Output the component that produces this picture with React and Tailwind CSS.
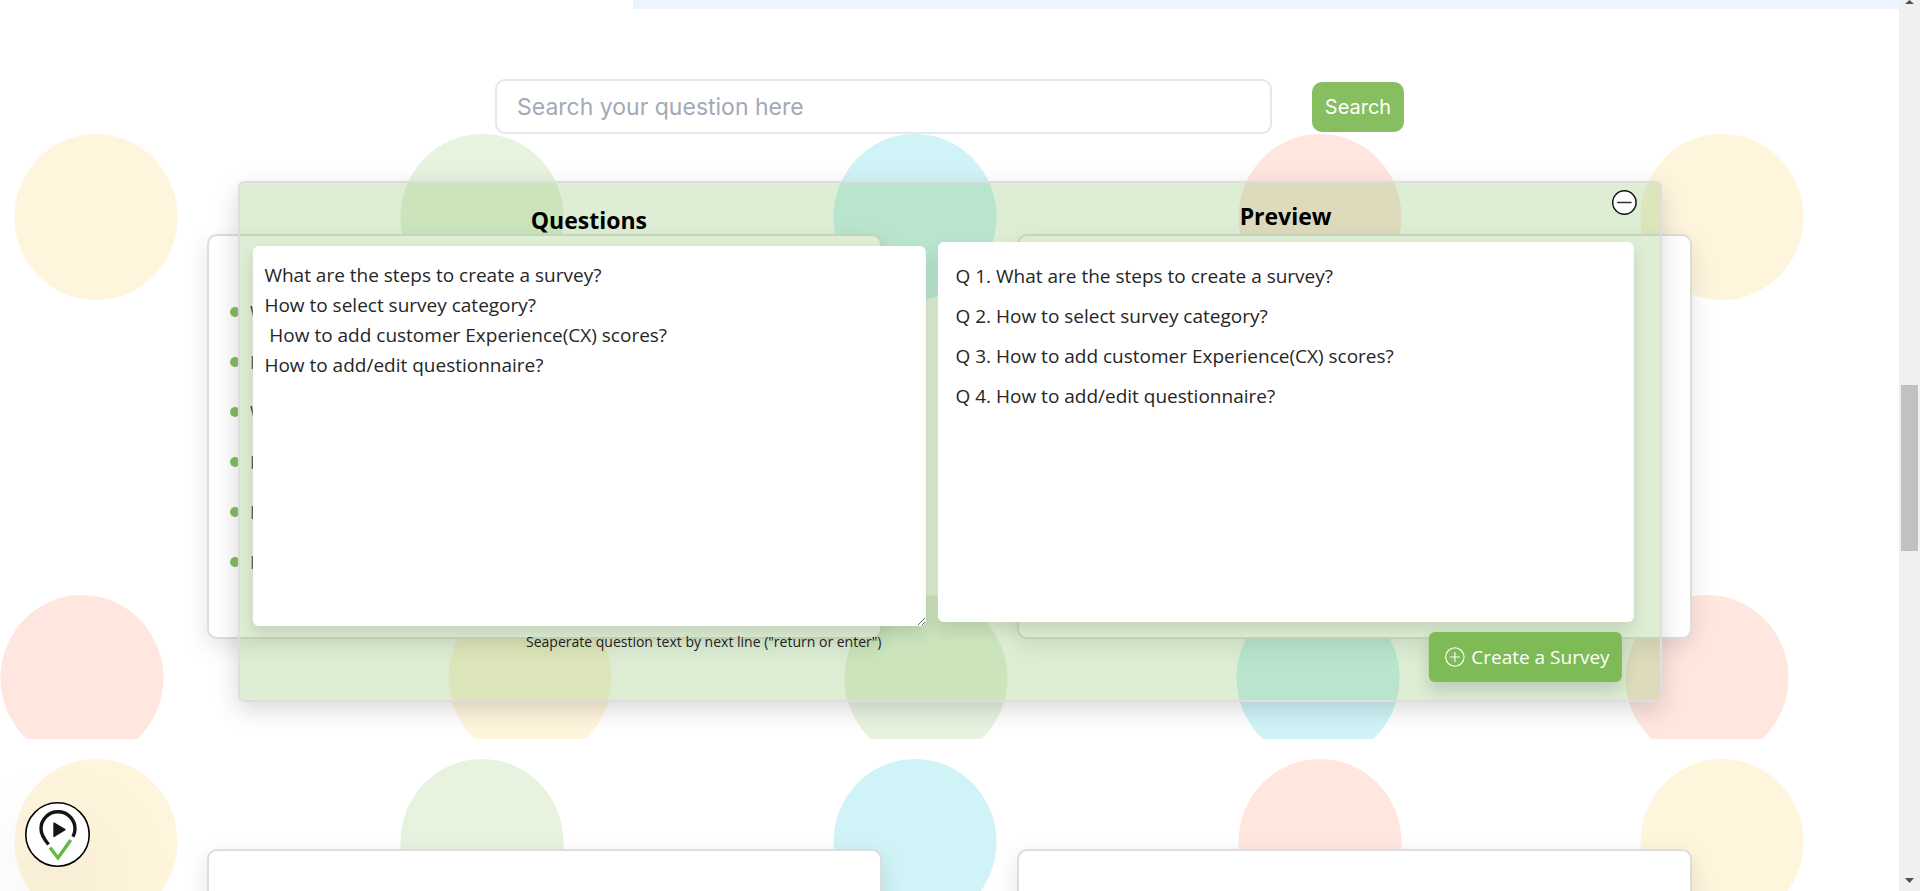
import { useState } from 'react';

const initialText = `What are the steps to create a survey?
How to select survey category?
 How to add customer Experience(CX) scores?
How to add/edit questionnaire?`;

const relatedQuestions = [
  'What are the steps to create a survey?',
  'How to select survey category?',
  'What are the steps to create a survey?',
  'How to add customer Experience(CX) scores?',
  'How to add/edit questionnaire?',
  'How to select survey category?'
];

const circles = [
  [96, 103, '#fff4dc'],
  [482, 103, '#e7f2df'],
  [915, 103, '#cff3f7'],
  [1320, 103, '#ffe6df'],
  [1722, 103, '#fff4dc'],
  [82, 564, '#ffe6df'],
  [530, 564, '#fff4dc'],
  [926, 564, '#e7f2df'],
  [1318, 564, '#cff3f7'],
  [1707, 564, '#ffe6df']
];

function CirclesBackground() {
  return (
    <svg className="block h-[625px] w-full" viewBox="0 0 1899 625" preserveAspectRatio="none" aria-hidden="true">
      {circles.map(([cx, cy, fill]) => (
        <ellipse key={`${cx}-${cy}`} cx={cx} cy={cy} rx="81.5" ry="83" fill={fill} />
      ))}
    </svg>
  );
}

function Card({ children }) {
  return (
    <div className="h-[405px] rounded-[10px] border-2 border-[#dddddd] bg-white shadow-[0_8px_24px_rgba(0,0,0,0.11)]">
      {children}
    </div>
  );
}

function SearchForm() {
  return (
    <form className="mx-auto mt-[70px] flex w-full max-w-[909px] items-center gap-10 font-['Inter',sans-serif]" onSubmit={(e) => e.preventDefault()}>
      <input
        type="text"
        aria-label="Search your question here"
        placeholder="Search your question here"
        className="h-[55px] min-w-0 flex-1 rounded-[10px] border-2 border-[#e6e7ee] bg-white px-5 text-[23px] text-gray-700 outline-none placeholder:text-[#a3a9b6]"
      />
      <button type="submit" className="h-[50px] w-[92px] rounded-[10px] bg-[#86be60] text-xl text-white">Search</button>
    </form>
  );
}

function SurveyModal() {
  const [text, setText] = useState(initialText);
  const questions = text.split('\n').map((q) => q.trim()).filter(Boolean);

  return (
    <div
      role="dialog"
      aria-label="Create a survey"
      className="absolute top-[181px] left-1/2 w-3/4 -translate-x-1/2 rounded-md border-2 border-[#dddddd] bg-[rgba(124,190,90,0.26)] shadow-[0_8px_24px_rgba(0,0,0,0.15)]"
    >
      <div className="grid grid-cols-[673fr_696fr] gap-3 pt-[18px] pr-[26px] pb-[18px] pl-[13px]">
        <div className="pt-1">
          <label htmlFor="questions" className="mb-[11px] block text-center text-[23px] leading-[30px] font-bold text-black">Questions</label>
          <textarea
            id="questions"
            spellCheck="false"
            value={text}
            onChange={(e) => setText(e.target.value)}
            className="block h-[380px] w-full rounded-md bg-white px-3 py-3.5 text-[19px] leading-[30px] text-[#262626] shadow-[0_8px_16px_rgba(0,0,0,0.11)] outline-none"
          />
          <p className="mt-1.5 pr-11 text-right text-sm text-[#212121]">Seaperate question text by next line ("return or enter")</p>
        </div>
        <div>
          <h2 className="mb-[11px] text-center text-[23px] leading-[30px] font-bold text-black">Preview</h2>
          <ul className="h-[380px] rounded-md bg-white px-[18px] py-3.5 text-[19px] leading-10 text-[#262626] shadow-[0_8px_16px_rgba(0,0,0,0.11)]">
            {questions.map((question, i) => (
              <li key={i}>Q {i + 1}. {question}</li>
            ))}
          </ul>
          <div className="mt-2.5 mr-3 flex justify-end">
            <button type="button" className="flex h-[50px] w-[193px] items-center justify-end gap-1.5 rounded-md bg-[#7eba55] pr-3 text-[19px] font-medium text-white shadow-[0_8px_16px_rgba(0,0,0,0.15)]">
              <svg width="20" height="20" viewBox="0 0 20 20" fill="none" stroke="currentColor" strokeWidth="1.1" aria-hidden="true">
                <circle cx="10" cy="10" r="9.2" />
                <path d="M10 5v10M5 10h10" />
              </svg>
              Create a Survey
            </button>
          </div>
        </div>
      </div>
      <button type="button" aria-label="Minimize" className="absolute top-[7px] right-[23px]">
        <svg width="25" height="25" viewBox="0 0 25 25" aria-hidden="true">
          <circle cx="12.5" cy="12.5" r="11.7" fill="#fff" stroke="#111" strokeWidth="1.5" />
          <path d="M6 12.5h13" stroke="#333" strokeWidth="1.7" strokeLinecap="round" />
        </svg>
      </button>
    </div>
  );
}

function HelpButton() {
  return (
    <button type="button" aria-label="Help videos" className="absolute bottom-6 left-[25px] rounded-full shadow-[0_40px_100px_10px_rgba(0,0,0,0.08)]">
      <svg width="65" height="65" viewBox="0 0 65 65" fill="none" aria-hidden="true">
        <circle cx="32.5" cy="32.5" r="31.7" fill="#fff" stroke="#000" strokeWidth="1.6" />
        <path d="M23.5 42.500C19 37 16 32.500 16 26.700a17 17 0 0 1 34 0c0 3-.700 5.500-2 8" stroke="#151515" strokeWidth="3.4" />
        <path d="M29 21v13.500l11-6.800z" fill="#151515" stroke="#151515" strokeWidth="1.4" strokeLinejoin="round" />
        <path d="M25 45.500l8 10.500 12.800-18" stroke="#62b946" strokeWidth="3.4" />
      </svg>
    </button>
  );
}

function ScrollTrack() {
  return (
    <div className="flex w-[21px] shrink-0 flex-col items-center bg-[#f0f0f0]" aria-hidden="true">
      <svg width="9" height="5" viewBox="0 0 9 5"><path d="M0 4h9L4.500 0z" fill="#505050" /></svg>
      <div className="flex-[380]" />
      <div className="h-[166px] w-[17px] bg-[#c1c1c1]" />
      <div className="flex-[327]" />
      <svg className="mb-2" width="9" height="5" viewBox="0 0 9 5"><path d="M0 0h9L4.500 5z" fill="#505050" /></svg>
    </div>
  );
}

export default function App() {
  return (
    <div className="flex h-screen overflow-hidden bg-white font-['Open_Sans','Noto_Sans',sans-serif]">
      <main className="relative min-w-0 flex-1 overflow-hidden">
        <div className="absolute inset-x-0 top-[114px]">
          <CirclesBackground />
          <CirclesBackground />
        </div>
        <div className="relative">
          <div className="ml-auto h-[9px] w-2/3 bg-[#ebf4ff]" />
          <SearchForm />
          <div className="mx-auto mt-[100px] grid w-[78.2%] grid-cols-2 gap-x-[135px] gap-y-[210px]">
            <Card>
              <ul className="px-[21px] pt-[51px]">
                {relatedQuestions.map((question, i) => (
                  <li key={i} className="flex h-[50px] items-center gap-2.5">
                    <span className="h-2.5 w-2.5 shrink-0 rounded-full bg-[#84bd5f]" />
                    <a href="#answer" className="text-lg text-[#212121]">{question}</a>
                  </li>
                ))}
              </ul>
            </Card>
            <Card />
            <Card />
            <Card />
          </div>
        </div>
        <SurveyModal />
        <HelpButton />
      </main>
      <ScrollTrack />
    </div>
  );
}
